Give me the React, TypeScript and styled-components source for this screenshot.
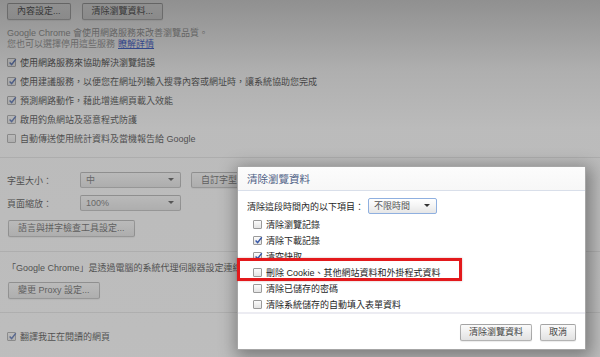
import React from "react";
import styled, { createGlobalStyle } from "styled-components";

const GlobalStyle = createGlobalStyle`
  html, body {
    margin: 0;
    padding: 0;
    width: 600px;
    height: 357px;
    overflow: hidden;
    background: #fff;
  }
  body {
    font-family: "Liberation Sans", "Noto Sans CJK TC", sans-serif;
    font-size: 9px;
    color: #222;
  }
`;

const Screen = styled.div`
  position: relative;
  width: 600px;
  height: 357px;
  overflow: hidden;
`;

/* ---------- settings page underneath ---------- */

const Settings = styled.div`
  display: flex;
  flex-direction: column;
  padding: 3px 0 0 7px;
`;

const Section = styled.div<{ $top?: number; $bottom?: number }>`
  display: flex;
  flex-direction: column;
  align-items: flex-start;
  padding-top: ${(p) => p.$top ?? 0}px;
  padding-bottom: ${(p) => p.$bottom ?? 0}px;
  border-bottom: 1px solid #e2e2e2;
  margin-left: -7px;
  padding-left: 7px;
  width: 100%;

  &:last-child {
    border-bottom: none;
  }
`;

const ButtonRow = styled.div`
  display: flex;
  gap: 11px;
`;

const Button = styled.button<{ $shift?: number; $top?: number }>`
  height: 17px;
  margin: ${(p) => p.$top ?? 0}px 0 0 ${(p) => p.$shift ?? 0}px;
  padding: 0 9px;
  border: 1px solid rgba(0, 0, 0, 0.28);
  border-radius: 2px;
  background: linear-gradient(#fafafa, #f1f1f1 40%, #e2e2e2);
  box-shadow: 0 1px 1px rgba(0, 0, 0, 0.08);
  font: inherit;
  font-size: 9px;
  color: #444;
  line-height: 15px;
  white-space: nowrap;
`;

const Note = styled.div`
  margin-top: 8px;
  line-height: 11px;
  color: #8a8a8a;
`;

const Link = styled.span`
  color: #1a44cc;
  text-decoration: underline;
  margin-left: 3px;
`;

const CheckList = styled.div<{ $top?: number }>`
  display: flex;
  flex-direction: column;
  margin-top: ${(p) => p.$top ?? 0}px;
`;

const CheckRow = styled.label<{ $h: number }>`
  display: flex;
  align-items: center;
  gap: 4px;
  height: ${(p) => p.$h}px;
  white-space: nowrap;
  color: #1e1e1e;
`;

const Box = styled.span`
  position: relative;
  flex: none;
  width: 9px;
  height: 9px;
  box-sizing: border-box;
  border: 1px solid #9a9a9a;
  border-radius: 1px;
  background: linear-gradient(#fbfbfb, #e4e4e4);

  svg {
    position: absolute;
    left: 0;
    top: -1px;
  }
`;

const FieldRow = styled.div<{ $top?: number }>`
  display: flex;
  align-items: center;
  margin-top: ${(p) => p.$top ?? 0}px;
  height: 16px;
`;

const FieldLabel = styled.span`
  width: 73px;
  color: #1e1e1e;
`;

const Select = styled.div<{ $w: number; $focus?: boolean }>`
  position: relative;
  width: ${(p) => p.$w}px;
  height: 16px;
  box-sizing: border-box;
  padding-left: 5px;
  border: 1px solid ${(p) => (p.$focus ? "#8fb0e0" : "rgba(0, 0, 0, 0.28)")};
  border-radius: 2px;
  background: ${(p) =>
    p.$focus
      ? "linear-gradient(#ffffff, #f4f4f4 50%, #e6e6e6)"
      : "linear-gradient(#fafafa, #f1f1f1 40%, #e2e2e2)"};
  color: #555;
  line-height: 14px;

  &::after {
    content: "";
    position: absolute;
    right: 6px;
    top: 5px;
    border-left: 3px solid transparent;
    border-right: 3px solid transparent;
    border-top: 3px solid #333;
  }
`;

const Para = styled.div`
  line-height: 11px;
  color: #1e1e1e;
  white-space: nowrap;
`;

/* ---------- overlay + dialog ---------- */

const Overlay = styled.div`
  position: absolute;
  inset: 0;
  background: linear-gradient(
    rgba(34, 34, 34, 0.5) 0px,
    rgba(95, 95, 95, 0.5) 70px,
    rgba(120, 120, 120, 0.5) 130px,
    rgba(124, 124, 124, 0.5) 100%
  );
`;

const Dialog = styled.div`
  position: absolute;
  left: 237px;
  top: 166px;
  width: 349px;
  display: flex;
  flex-direction: column;
  box-sizing: border-box;
  border: 1px solid rgba(0, 0, 0, 0.35);
  background: #fff;
  box-shadow: 2px 4px 16px 3px rgba(0, 0, 0, 0.35);
`;

const DialogHeader = styled.div`
  height: 23px;
  display: flex;
  align-items: center;
  padding-left: 9px;
  border-bottom: 1px solid #d9dfea;
  background: linear-gradient(#fcfcfc, #f7f7f7);
  font-size: 10.5px;
  color: #4f6186;
`;

const DialogBody = styled.div`
  height: 121px;
  box-sizing: border-box;
  padding: 7px 0 0 9px;
`;

const PeriodRow = styled.div`
  display: flex;
  align-items: center;
  gap: 4px;
  color: #1e1e1e;
`;

const DialogFooter = styled.div`
  height: 35px;
  display: flex;
  justify-content: flex-end;
  align-items: center;
  gap: 8px;
  padding-right: 9px;
  border-top: 2px solid #ececf2;
`;

const DialogButton = styled(Button)`
  padding: 0 8px;
  margin-top: 1px;
`;

const Highlight = styled.div`
  position: absolute;
  left: -1px;
  top: 91px;
  width: 225px;
  height: 23px;
  box-sizing: border-box;
  border: 3px solid #e3191c;
  box-shadow: 0 0 2px rgba(120, 0, 0, 0.3);
`;

const Check = () => (
  <svg width="9" height="9" viewBox="0 0 9 9">
    <path
      d="M1.6 4.6 L3.6 6.6 L7.8 1.2"
      fill="none"
      stroke="#3657a8"
      strokeWidth="1.4"
    />
  </svg>
);

const Checkbox: React.FC<{ checked?: boolean; label: string; h: number }> = ({
  checked,
  label,
  h,
}) => (
  <CheckRow $h={h}>
    <Box>{checked && <Check />}</Box>
    <span>{label}</span>
  </CheckRow>
);

const privacyItems = [
  { label: "使用網路服務來協助解決瀏覽錯誤", checked: true },
  {
    label: "使用建議服務，以便您在網址列輸入搜尋內容或網址時，讓系統協助您完成",
    checked: true,
  },
  { label: "預測網路動作，藉此增進網頁載入效能", checked: true },
  { label: "啟用釣魚網站及惡意程式防護", checked: true },
  { label: "自動傳送使用統計資料及當機報告給 Google", checked: false },
];

const clearItems = [
  { label: "清除瀏覽記錄", checked: false },
  { label: "清除下載記錄", checked: true },
  { label: "清空快取", checked: true },
  { label: "刪除 Cookie、其他網站資料和外掛程式資料", checked: false },
  { label: "清除已儲存的密碼", checked: false },
  { label: "清除系統儲存的自動填入表單資料", checked: false },
];

export default function App() {
  return (
    <Screen>
      <GlobalStyle />
      <Settings>
        <Section $bottom={9}>
          <ButtonRow>
            <Button>內容設定...</Button>
            <Button>清除瀏覽資料...</Button>
          </ButtonRow>
          <Note>
            Google Chrome 會使用網路服務來改善瀏覽品質。
            <br />
            您也可以選擇停用這些服務<Link>瞭解詳情</Link>
          </Note>
          <CheckList $top={3}>
            {privacyItems.map((item) => (
              <Checkbox key={item.label} h={19} {...item} />
            ))}
          </CheckList>
        </Section>

        <Section $top={14} $bottom={14}>
          <FieldRow>
            <FieldLabel>字型大小：</FieldLabel>
            <Select $w={101}>中</Select>
            <Button $shift={10} style={{ height: 16 }}>
              自訂字型...
            </Button>
          </FieldRow>
          <FieldRow $top={7}>
            <FieldLabel>頁面縮放：</FieldLabel>
            <Select $w={101}>100%</Select>
          </FieldRow>
          <Button $shift={1} $top={9}>
            語言與拼字檢查工具設定...
          </Button>
        </Section>

        <Section $top={11} $bottom={13}>
          <Para>
            「Google Chrome」是透過電腦的系統代理伺服器設定連線到網路。
          </Para>
          <Button $shift={1} $top={8}>
            變更 Proxy 設定...
          </Button>
        </Section>

        <Section $top={14}>
          <CheckList>
            <Checkbox h={19} checked label="翻譯我正在閱讀的網頁" />
          </CheckList>
        </Section>
      </Settings>

      <Overlay>
        <Dialog>
          <DialogHeader>清除瀏覽資料</DialogHeader>
          <DialogBody>
            <PeriodRow>
              <span>清除這段時間內的以下項目：</span>
              <Select $w={69} $focus>
                不限時間
              </Select>
            </PeriodRow>
            <CheckList $top={2} style={{ paddingLeft: 6 }}>
              {clearItems.map((item) => (
                <Checkbox key={item.label} h={16} {...item} />
              ))}
            </CheckList>
          </DialogBody>
          <DialogFooter>
            <DialogButton>清除瀏覽資料</DialogButton>
            <DialogButton>取消</DialogButton>
          </DialogFooter>
          <Highlight />
        </Dialog>
      </Overlay>
    </Screen>
  );
}
